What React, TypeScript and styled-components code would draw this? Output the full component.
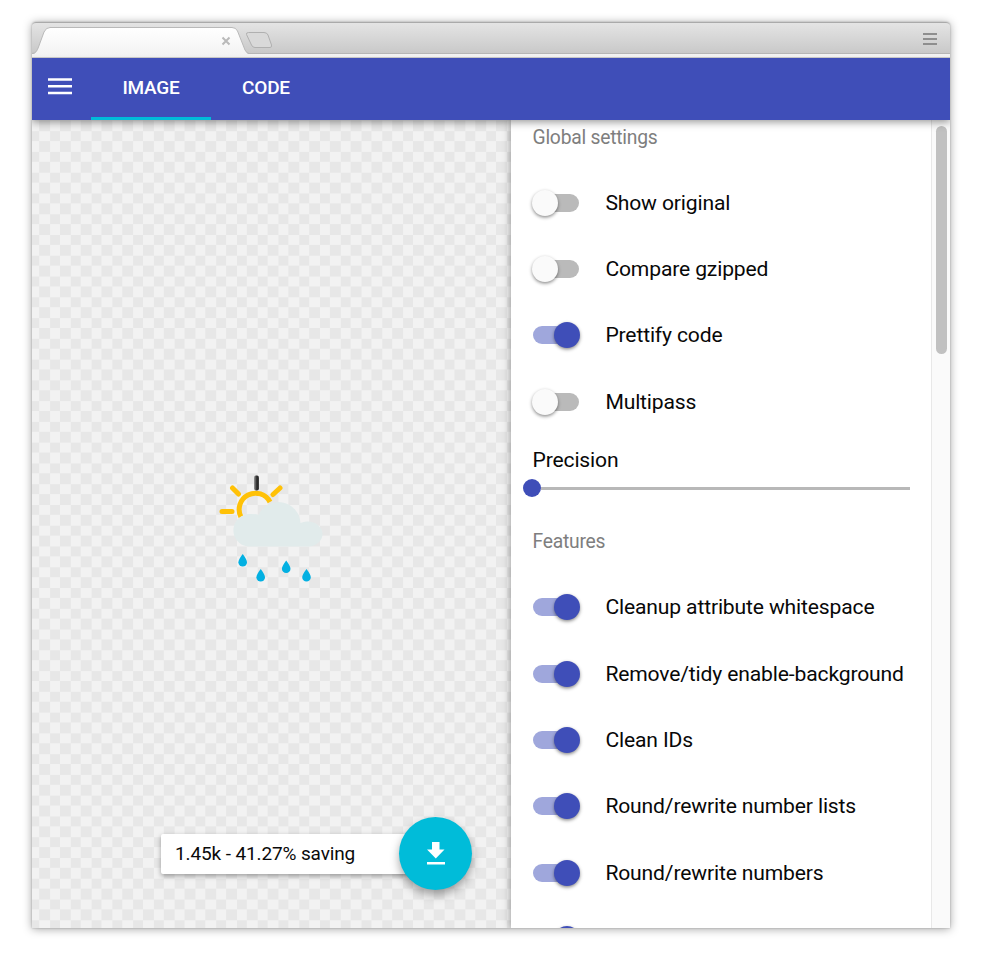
import React from 'react';
import styled, { createGlobalStyle } from 'styled-components';

const GlobalStyle = createGlobalStyle`
  * { box-sizing: border-box; }
  html, body { margin: 0; background: #fff; }
  body { font-family: Roboto, "Liberation Sans", sans-serif; overflow: hidden; }
`;

const Page = styled.div`
  width: 982px;
  height: 960px;
  padding: 22px 32px 32px;
`;

const Window = styled.div`
  display: flex;
  flex-direction: column;
  width: 918px;
  height: 906px;
  border-radius: 4px 4px 0 0;
  box-shadow: 0 0 2px rgba(0, 0, 0, 0.28), 0 1px 10px rgba(0, 0, 0, 0.36);
`;

const TabStrip = styled.div`
  display: flex;
  justify-content: space-between;
  height: 36px;
  flex: none;
  border-top: 1px solid #aaa;
  border-radius: 4px 4px 0 0;
  background: linear-gradient(#e4e4e4, #c9c9c9 30px, #b6b6b6 30px, #b6b6b6 31px, #f3f3f3 31px, #efefef 34px, #c6c6c6 34px);
`;

const StripMenu = styled.svg`
  margin: 10px 13px 0 0;
`;

const Toolbar = styled.nav`
  position: relative;
  z-index: 2;
  display: flex;
  flex: none;
  height: 62px;
  background: #3f4eb8;
  box-shadow: 0 2px 8px rgba(0, 0, 0, 0.42);
  clip-path: inset(0 0 -16px 0);
`;

const MenuButton = styled.button`
  width: 59px;
  padding: 20px 0 0 16px;
  border: 0;
  background: none;
  display: flex;
  align-items: flex-start;
`;

const Tab = styled.button<{ $active?: boolean; $width: number }>`
  width: ${(p) => p.$width}px;
  padding: 0;
  border: 0;
  border-bottom: 3px solid ${(p) => (p.$active ? '#00bcd9' : 'transparent')};
  background: none;
  color: #fff;
  font: 500 19px/58px Roboto, sans-serif;
  letter-spacing: -0.22px;
`;

const Body = styled.div`
  display: flex;
  flex: 1;
  min-height: 0;
  overflow: hidden;
`;

const Canvas = styled.main`
  position: relative;
  width: 479px;
  background: conic-gradient(#f2f2f2 25%, #e7e7e7 0 50%, #f2f2f2 0 75%, #e7e7e7 0) 7.2px 0.3px / 20.78px 20.78px;
`;

const Artwork = styled.svg`
  position: absolute;
  left: 168px;
  top: 340px;
`;

const Results = styled.div`
  position: absolute;
  left: 129px;
  top: 697px;
  display: flex;
  align-items: center;
`;

const Savings = styled.div`
  width: 276px;
  height: 40px;
  margin: 1px -38px 0 0;
  padding-left: 14px;
  border-radius: 2px;
  background: #fff;
  color: #0a0a0a;
  font-size: 19px;
  letter-spacing: -0.12px;
  line-height: 39px;
  box-shadow: 0 2px 5px rgba(0, 0, 0, 0.35);
`;

const DownloadButton = styled.button`
  position: relative;
  width: 73px;
  height: 73px;
  padding: 0;
  border: 0;
  border-radius: 50%;
  background: #00bcd9;
  box-shadow: 0 5px 10px rgba(0, 0, 0, 0.35);
  display: grid;
  place-items: center;
`;

const Settings = styled.aside`
  position: relative;
  z-index: 1;
  width: 420px;
  padding: 0 21px;
  background: #fff;
  box-shadow: 0 0 8px rgba(0, 0, 0, 0.42);
  clip-path: inset(0 0 0 -12px);
`;

const SectionTitle = styled.h2<{ $space: number; $gap: number }>`
  margin: ${(p) => p.$space}px 0 ${(p) => p.$gap}px 0.5px;
  color: #7e7e7e;
  font-size: 19.3px;
  letter-spacing: -0.23px;
  font-weight: 400;
  line-height: 24px;
`;

const Option = styled.label`
  display: flex;
  align-items: center;
  height: 66.35px;
  color: #080808;
  font-size: 21.1px;
  letter-spacing: -0.15px;
  white-space: nowrap;
`;

const Track = styled.span<{ $on: boolean }>`
  display: flex;
  align-items: center;
  justify-content: ${(p) => (p.$on ? 'flex-end' : 'flex-start')};
  flex: none;
  width: 46px;
  height: 18px;
  margin: 1px 26.4px 0 1px;
  border-radius: 9px;
  background: ${(p) => (p.$on ? '#9fa7dc' : '#bababa')};
`;

const Knob = styled.span<{ $on: boolean }>`
  flex: none;
  width: 26px;
  height: 26px;
  margin: 0 ${(p) => (p.$on ? -1 : 0)}px 0 ${(p) => (p.$on ? 0 : -1)}px;
  border-radius: 50%;
  background: ${(p) => (p.$on ? '#3f4eb8' : '#fafafa')};
  box-shadow: 0 1.5px 3.5px rgba(0, 0, 0, 0.45);
`;

const SliderLabel = styled.div`
  margin: 14px 0 0 0.5px;
  color: #080808;
  font-size: 21.1px;
  letter-spacing: -0.15px;
  line-height: 24px;
`;

const Slider = styled.div`
  display: flex;
  align-items: center;
  height: 18px;
  margin: 7px 0 0 -9px;
`;

const SliderThumb = styled.span`
  width: 18px;
  height: 18px;
  border-radius: 50%;
  background: #3f4eb8;
`;

const SliderRail = styled.span`
  width: 370px;
  height: 3px;
  background: #b8b8b8;
`;

const Scrollbar = styled.div`
  width: 19px;
  padding: 6px 3px 0 4px;
  border-left: 1px solid #e8e8e8;
  background: #fafafa;
`;

const ScrollThumb = styled.div`
  width: 11px;
  height: 228px;
  border-radius: 5.5px;
  background: #c1c1c1;
`;

const globals = [
  { label: 'Show original', on: false },
  { label: 'Compare gzipped', on: false },
  { label: 'Prettify code', on: true },
  { label: 'Multipass', on: false },
];

const features = [
  'Cleanup attribute whitespace',
  'Remove/tidy enable-background',
  'Clean IDs',
  'Round/rewrite number lists',
  'Round/rewrite numbers',
  '',
];

function Toggle({ label, on }: { label: string; on: boolean }) {
  return (
    <Option>
      <Track $on={on}>
        <Knob $on={on} />
      </Track>
      {label}
    </Option>
  );
}

function BrowserTabs() {
  return (
    <TabStrip>
      <svg width="244" height="33" viewBox="0 0 244 33">
        <defs>
          <linearGradient id="tabFill" x1="0" y1="0" x2="0" y2="1">
            <stop offset="0" stopColor="#fff" />
            <stop offset="1" stopColor="#f3f3f3" />
          </linearGradient>
        </defs>
        <path
          d="M0 31.500C4 30.500 5 28 6.500 24L12 9Q14 4.500 18 4.500H200Q204 4.500 205.500 8L213 27Q214.500 30.500 217 31.500Z"
          fill="url(#tabFill)"
        />
        <path
          d="M0 30.500C4 30 5 28 6.500 24L12 9Q14 4.500 18 4.500H200Q204 4.500 205.500 8L213 27Q214.500 30 217 30.500"
          fill="none"
          stroke="#b9b9b9"
        />
        <path d="M190.500 14.500l7 7m0-7l-7 7" stroke="#b9b9b9" strokeWidth="2" />
        <path
          d="M216.500 9.500H232Q235 9.500 236 12L239.500 22Q240 24.500 238 24.500H223Q220.500 24.500 219.500 22L214.500 11.500Q214 9.500 216.500 9.500Z"
          fill="#d9d9d9"
          stroke="#b0b0b0"
        />
      </svg>
      <StripMenu width="14" height="13" viewBox="0 0 14 13">
        <path d="M0 1h14M0 6h14M0 11h14" stroke="#8e8e8e" strokeWidth="2" />
      </StripMenu>
    </TabStrip>
  );
}

function Weather() {
  return (
    <Artwork width="140" height="130" viewBox="0 0 140 130">
      <defs>
        <linearGradient id="ray">
          <stop offset="0" stopColor="#999" />
          <stop offset="0.600" stopColor="#222" />
          <stop offset="1" stopColor="#444" />
        </linearGradient>
      </defs>
      <g fill="none" stroke="#ffc107" strokeWidth="5" strokeLinecap="round">
        <path d="M22 51.500h10M32.500 28l6 6M80 28l-7 6.500" />
        <path d="M41 57A16 16 0 0 1 70 42" strokeLinecap="butt" />
      </g>
      <rect x="54" y="15.500" width="5" height="15" rx="2" fill="url(#ray)" />
      <path
        d="M48 86.500a16 16 0 1 1 3.500-32.500q4 0 7 1a22 22 0 0 1 42 8a15 12.500 0 1 1 8.500 23.500Z"
        fill="#e1ebeb"
      />
      <g fill="#03b0e2">
        <path d="M42.700 94q4.300 5.700 4.300 8.300a4.300 4.300 0 0 1-8.600 0q0-2.600 4.300-8.300Z" />
        <path d="M60.700 109q4.300 5.700 4.300 8.300a4.300 4.300 0 0 1-8.600 0q0-2.600 4.300-8.300Z" />
        <path d="M86.200 100.500q4.300 5.700 4.300 8.300a4.300 4.300 0 0 1-8.600 0q0-2.600 4.300-8.300Z" />
        <path d="M106.500 109q4.300 5.700 4.300 8.300a4.300 4.300 0 0 1-8.600 0q0-2.600 4.300-8.300Z" />
      </g>
    </Artwork>
  );
}

export default function App() {
  return (
    <>
      <GlobalStyle />
      <Page>
        <Window>
          <BrowserTabs />
          <Toolbar>
            <MenuButton aria-label="Menu">
              <svg width="24" height="17" viewBox="0 0 24 17">
                <path d="M0 1.500h24M0 8.200h24M0 15h24" stroke="#fff" strokeWidth="2.600" />
              </svg>
            </MenuButton>
            <Tab $active $width={120}>IMAGE</Tab>
            <Tab $width={110}>CODE</Tab>
          </Toolbar>
          <Body>
            <Canvas>
              <Weather />
              <Results>
                <Savings>1.45k - 41.27% saving</Savings>
                <DownloadButton aria-label="Download">
                  <svg width="19" height="23" viewBox="0 0 19 23">
                    <path d="M6 0h7.500v7.500h5L9.800 16.500 1 7.500h5zM1 20h18v2.500h-18z" fill="#fff" />
                  </svg>
                </DownloadButton>
              </Results>
            </Canvas>
            <Settings>
              <SectionTitle $space={6} $gap={18.9}>Global settings</SectionTitle>
              {globals.map((g) => (
                <Toggle key={g.label} label={g.label} on={g.on} />
              ))}
              <SliderLabel>Precision</SliderLabel>
              <Slider>
                <SliderThumb />
                <SliderRail />
              </Slider>
              <SectionTitle $space={32.9} $gap={19.6}>Features</SectionTitle>
              {features.map((label) => (
                <Toggle key={label} label={label} on />
              ))}
            </Settings>
            <Scrollbar>
              <ScrollThumb />
            </Scrollbar>
          </Body>
        </Window>
      </Page>
    </>
  );
}
